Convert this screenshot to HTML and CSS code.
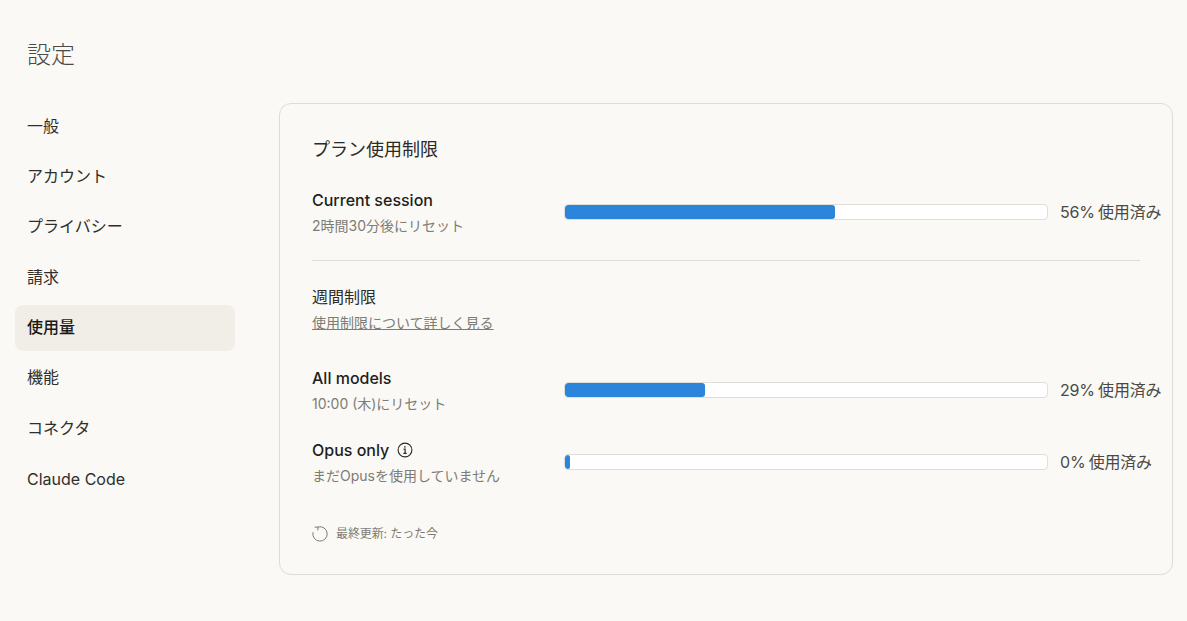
FILE: index.html
```html
<!DOCTYPE html>
<html lang="ja">
<head>
<meta charset="utf-8">
<title>設定</title>
<link rel="stylesheet" href="styles.css">
</head>
<body>
<div class="page">
  <h1 class="page-title">設定</h1>
  <div class="layout">
    <nav class="nav">
      <a class="nav-item">一般</a>
      <a class="nav-item">アカウント</a>
      <a class="nav-item">プライバシー</a>
      <a class="nav-item">請求</a>
      <a class="nav-item active">使用量</a>
      <a class="nav-item">機能</a>
      <a class="nav-item">コネクタ</a>
      <a class="nav-item nav-item-latin">Claude Code</a>
    </nav>
    <main class="card">
      <h2 class="card-title">プラン使用制限</h2>
      <div class="row row-session">
        <div class="info">
          <div class="label">Current session</div>
          <div class="sub">2時間30分後にリセット</div>
        </div>
        <div class="bar"><div class="fill" style="width:56%"></div></div>
        <div class="pct">56% 使用済み</div>
      </div>
      <hr class="divider">
      <div class="weekly">
        <div class="weekly-title">週間制限</div>
        <a class="link">使用制限について詳しく見る</a>
      </div>
      <div class="row row-models">
        <div class="info">
          <div class="label">All models</div>
          <div class="sub">10:00 (木)にリセット</div>
        </div>
        <div class="bar"><div class="fill" style="width:29%"></div></div>
        <div class="pct">29% 使用済み</div>
      </div>
      <div class="row row-opus">
        <div class="info">
          <div class="label">Opus only
            <svg class="info-icon" viewBox="0 0 16 16" width="16" height="16" fill="none" stroke="#2b2a27" stroke-width="1.1"><circle cx="8" cy="8" r="6.9"/><path d="M6.6 7.2H8.1V11.2M6.4 11.3H9.7" stroke-width="1.2"/><circle cx="7.9" cy="4.9" r="0.8" fill="#2b2a27" stroke="none"/></svg>
          </div>
          <div class="sub">まだOpusを使用していません</div>
        </div>
        <div class="bar"><div class="fill fill-min" style="width:1%"></div></div>
        <div class="pct">0% 使用済み</div>
      </div>
      <div class="updated">
        <svg class="refresh" viewBox="0 0 16 16" width="16" height="16" fill="none" stroke="#7d7c76" stroke-width="1"><path d="M6 1A7.2 7.2 0 1 1 1 6.2"/><path d="M2.6 1.2L6 1L5.8 4.4"/></svg>
        <span>最終更新: たった今</span>
      </div>
    </main>
  </div>
</div>
</body>
</html>
```
FILE: styles.css
```css
* { box-sizing: border-box; }
html, body { margin: 0; height: 100%; }
body {
  background: #faf9f5;
  color: #2b2a27;
  font-family: Inter, "Noto Sans CJK JP", sans-serif;
  overflow: hidden;
}
.page { padding: 37px 14px 0 15px; }
.page-title {
  margin: 0 0 0 12px;
  height: 36px;
  font-family: "Liberation Serif", "Noto Sans CJK JP", serif;
  font-size: 24px;
  line-height: 36px;
  font-weight: 300;
  color: #4a4945;
}
.layout {
  display: flex;
  align-items: flex-start;
  gap: 44px;
  margin-top: 30px;
}
.nav {
  width: 220px;
  flex: none;
  display: flex;
  flex-direction: column;
  gap: 4.4px;
}
.nav-item {
  display: flex;
  align-items: center;
  height: 46px;
  padding: 0 12px 3px;
  border-radius: 8px;
  font-size: 16px;
  color: #2f2e2b;
}
.nav-item-latin { padding-bottom: 0; }
.nav-item.active {
  background: #f0eee6;
  font-weight: 500;
  color: #1a1917;
}
.card {
  flex: 1;
  min-width: 0;
  height: 472px;
  border: 1px solid #dedcd5;
  border-radius: 12px;
  padding: 32px;
}
.card-title {
  margin: 0;
  font-size: 18px;
  line-height: 27px;
  font-weight: 400;
  color: #2b2a27;
}
.row {
  display: grid;
  grid-template-columns: 240px 484px 80px;
  column-gap: 12px;
  align-items: center;
}
.row-session { margin-top: 25px; }
.label {
  display: flex;
  align-items: center;
  gap: 8px;
  font-size: 16px;
  line-height: 24px;
  font-weight: 500;
  color: #1f1e1c;
}
.sub {
  font-size: 14px;
  line-height: 21px;
  margin-top: 3px;
  color: #7d7c76;
}
.bar {
  height: 16px;
  background: #fff;
  border: 1px solid #e0ded8;
  border-radius: 4px;
  overflow: hidden;
}
.fill {
  height: 100%;
  background: #2c84db;
  border-radius: 3px;
}
.fill-min { min-width: 5px; }
.pct {
  font-size: 16px;
  line-height: 24px;
  white-space: nowrap;
  letter-spacing: -0.2px;
  word-spacing: -1px;
  color: #4a4945;
}
.divider {
  margin: 24px 0 0;
  border: 0;
  height: 1px;
  background: #dedcd5;
}
.weekly { margin-top: 24px; }
.weekly-title {
  font-size: 16px;
  line-height: 24px;
  color: #2b2a27;
}
.link {
  display: block;
  margin-top: 3px;
  font-size: 14px;
  line-height: 21px;
  color: #7d7c76;
  text-decoration: underline;
}
.row-models { margin-top: 33px; }
.row-opus { margin-top: 24px; }
.updated {
  display: flex;
  align-items: center;
  gap: 8px;
  margin-top: 39px;
  font-size: 12px;
  line-height: 18px;
  letter-spacing: -0.1px;
  color: #7d7c76;
}
```
